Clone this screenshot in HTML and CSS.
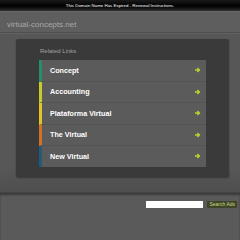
FILE: index.html
```html
<!DOCTYPE html>
<html>
<head>
  <title>virtual-concepts.net</title>
  <link rel="stylesheet" href="styles.css">
</head>
<body>
  <div class="topbar">This Domain Name Has Expired - Renewal Instructions.</div>
  <div class="header">virtual-concepts.net</div>
  <div class="content">
    <div class="box">
      <h2>Related Links</h2>
      <ul class="links">
        <li class="c1"><span>Concept</span><svg viewBox="0 0 6 6"><path d="M0 3h4M2.4 1 4.5 3 2.4 5" /></svg></li>
        <li class="c2"><span>Accounting</span><svg viewBox="0 0 6 6"><path d="M0 3h4M2.4 1 4.5 3 2.4 5" /></svg></li>
        <li class="c3"><span>Plataforma Virtual</span><svg viewBox="0 0 6 6"><path d="M0 3h4M2.4 1 4.5 3 2.4 5" /></svg></li>
        <li class="c4"><span>The Virtual</span><svg viewBox="0 0 6 6"><path d="M0 3h4M2.4 1 4.5 3 2.4 5" /></svg></li>
        <li class="c5"><span>New Virtual</span><svg viewBox="0 0 6 6"><path d="M0 3h4M2.4 1 4.5 3 2.4 5" /></svg></li>
      </ul>
    </div>
  </div>
  <div class="footer">
    <div class="search">
      <input type="text">
      <button>Search Ads</button>
    </div>
  </div>
</body>
</html>
```

FILE: styles.css
```css
body {
  margin: 0;
  background-color: #5a5a5a;
  font-family: "Liberation Sans", Arial, sans-serif;
  width: 240px;
  height: 240px;
  overflow: hidden;
}

.topbar {
  height: 11px;
  line-height: 11px;
  background: linear-gradient(#1a1a1a, #000 55%, #2e2e2e);
  color: #fff;
  font-size: 4.4px;
  text-align: center;
  border-bottom: 1px solid #6a6a6a;
}

.header {
  height: 20px;
  line-height: 26px;
  padding-left: 7px;
  color: #a8a8a8;
  font-size: 8px;
  background-color: #5e5e5e;
  border-bottom: 1px solid #4e4e4e;
}

.content {
  height: 153px;
  padding: 5px 11px 0 16px;
  background: linear-gradient(#575757, #575757 85%, #4e4e4e);
  border-top: 1px solid #626262;
}

.box {
  height: 130px;
  background-color: #3a3a3a;
  border-radius: 2px;
  box-shadow: 0 1px 2px rgba(0, 0, 0, 0.35);
  padding: 8px 23px 0 23px;
}

.box h2 {
  margin: 0 0 4px 1px;
  font-size: 6px;
  font-weight: normal;
  color: #a0a0a0;
  line-height: 9px;
}

.links {
  list-style: none;
  margin: 0;
  padding: 0;
}

.links li {
  height: 20.5px;
  display: flex;
  align-items: center;
  justify-content: space-between;
  padding: 0 5px 0 8px;
  background-color: #5b5b5b;
  border-left: 3px solid #2a8c6c;
  border-bottom: 1px solid #545454;
  color: #fff;
  font-size: 7.2px;
  font-weight: bold;
}

.links li:last-child {
  border-bottom: none;
}

.links svg {
  width: 6px;
  height: 6px;
  fill: none;
  stroke: #b8d62a;
  stroke-width: 1.3;
}

.links .c1 { border-left-color: #2a8c6c; }
.links .c2 { border-left-color: #c8cc28; }
.links .c3 { border-left-color: #e2c422; }
.links .c4 { border-left-color: #d27222; }
.links .c5 { border-left-color: #1f5c7c; }

.footer {
  height: 40px;
  box-shadow: inset 0 2px 2px rgba(0, 0, 0, 0.35);
  border-top: 1px solid #444;
  padding-top: 8px;
}

.search {
  display: flex;
  justify-content: flex-end;
  align-items: center;
  gap: 4px;
  padding-right: 3px;
}

.search input {
  width: 57px;
  height: 7px;
  padding: 0;
  border: none;
  background-color: #fff;
}

.search button {
  height: 7px;
  padding: 0 2px;
  border: none;
  border-radius: 1px;
  background-color: #3e4526;
  color: #c8d88a;
  font-family: "Liberation Sans", Arial, sans-serif;
  font-size: 5px;
  line-height: 7px;
}
```
